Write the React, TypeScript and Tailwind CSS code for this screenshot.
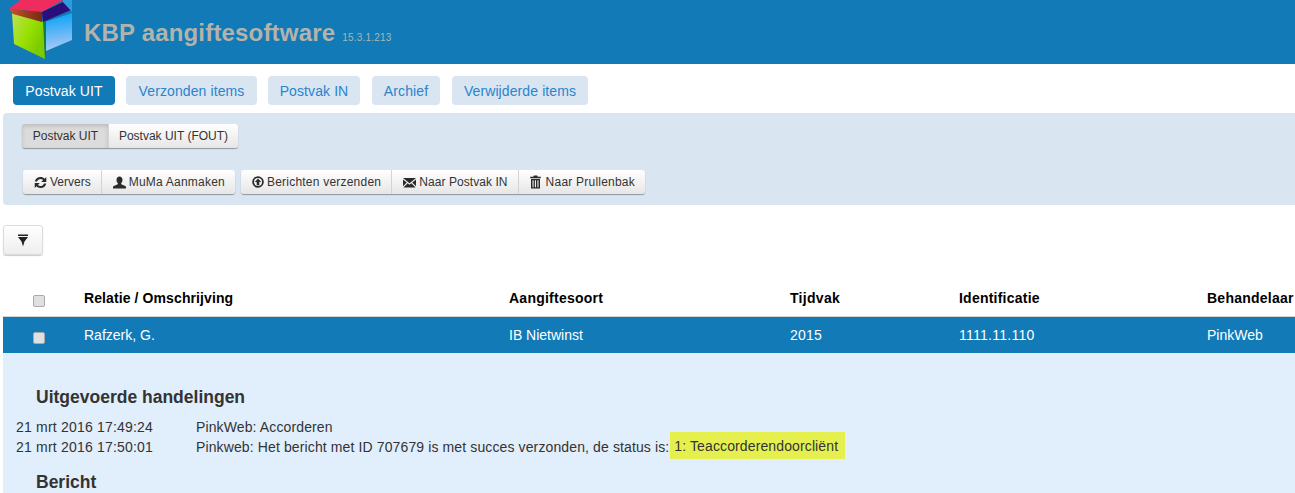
import React from "react";

const Logo = () => (
  <svg width="66" height="60" viewBox="9 0 66 60" className="ml-[9px] shrink-0">
    <defs>
      <linearGradient id="g1" x1="0" y1="0" x2="0.9" y2="0.6"><stop offset="0" stopColor="#bfe05c" /><stop offset="0.6" stopColor="#98e000" /><stop offset="1" stopColor="#7ccb00" /></linearGradient>
      <linearGradient id="g2" x1="0" y1="0" x2="0.1" y2="1"><stop offset="0" stopColor="#009ff7" /><stop offset="1" stopColor="#a8c9f6" /></linearGradient>
      <linearGradient id="g3" x1="0" y1="0" x2="1" y2="0"><stop offset="0" stopColor="#c4552c" /><stop offset="1" stopColor="#7a2a12" /></linearGradient>
    </defs>
    <polygon points="12,13 44,22 45,59 14,44" fill="url(#g1)" />
    <polygon points="45,22 72,13 72,40 46,51" fill="url(#g2)" />
    <polygon points="43,22 46,22 46,52 45,59" fill="#12803c" />
    <polygon points="9,9 20,0 63,0 42,12" fill="#ee2c5e" />
    <polygon points="9,9 42,12 42,22 13,14" fill="url(#g3)" />
    <polygon points="42,12 63,2 71,10 43,22" fill="#2a0f7a" />
    <polygon points="63,0 72,0 72,12 63,2" fill="#2c9be0" />
  </svg>
);

const Refresh = () => (
  <svg width="13" height="13" viewBox="0 0 13 13" className="shrink-0">
    <path d="M.8 5.600C1.300 2.700 3.600 1 6.500 1c1.700 0 3 .6 4.100 1.700L12.300.900v5H7.300l1.800-1.800c-.7-.7-1.600-1.100-2.600-1.100-1.500 0-2.900.9-3.500 2.600H.8zM12.200 7.400C11.700 10.300 9.400 12 6.500 12c-1.700 0-3-.6-4.100-1.700L.7 12.100v-5h5L3.900 8.900c.7.7 1.600 1.100 2.600 1.100 1.500 0 2.900-.9 3.500-2.600h2.200z" fill="#2a2a2a" />
  </svg>
);
const User = () => (
  <svg width="13" height="13" viewBox="0 0 13 13" className="shrink-0">
    <path d="M6.500.5c1.800 0 3 1.400 3 3.400 0 1.300-.5 2.500-1.300 3.100v1.300l4 1.700c.5.200.8.600.8 1.100v1.400H0v-1.400c0-.5.300-.9.800-1.100l4-1.700V7c-.8-.6-1.300-1.800-1.300-3.100C3.500 1.900 4.700.5 6.500.5z" fill="#2a2a2a" />
  </svg>
);
const CircleUp = () => (
  <svg width="12" height="12" viewBox="0 0 12 12" className="shrink-0">
    <circle cx="6" cy="6" r="4.900" fill="none" stroke="#2a2a2a" strokeWidth="1.800" />
    <path d="M6 2.600 9.200 6H7.300v3.200H4.700V6H2.800z" fill="#2a2a2a" />
  </svg>
);
const Mail = () => (
  <svg width="13" height="11" viewBox="0 0 13 11" className="shrink-0">
    <path d="M0 1h13L6.500 6.200 0 1zM0 2.500 3.800 5.600 0 9.200V2.500zM13 2.500v6.700L9.200 5.600 13 2.500zM4.700 6.300l1.800 1.500 1.800-1.500 4.300 4.200H.4l4.300-4.200z" fill="#2a2a2a" />
  </svg>
);
const Trash = () => (
  <svg width="11" height="14" viewBox="0 0 11 14" className="shrink-0">
    <path d="M3.800.5h3.400l.5 1.200h3.100v1.500H.2V1.700h3.100L3.800.500zM1 4h9v9.500H1V4zM2.500 5.200v7h1.100v-7H2.500zM4.900 5.200v7H6v-7H4.900zM7.400 5.200v7h1.100v-7H7.400z" fill="#2a2a2a" fillRule="evenodd" />
  </svg>
);
const Funnel = () => (
  <svg width="10" height="13" viewBox="0 0 10 13">
    <path d="M0 .5h10v1.400H0zM0 3h10L6.500 7.500 5 12.500 3.500 7.500z" fill="#222" />
  </svg>
);

const btn =
  "flex h-[24px] items-center gap-[3px] border-r border-[#d4d4d4] bg-gradient-to-b from-white to-[#e6e6e6] text-[12px] text-[#333] last:border-r-0";

function Group({ children }: { children: React.ReactNode }) {
  return (
    <div className="flex w-fit overflow-hidden rounded-[3px] shadow-[0_1px_1px_rgba(0,0,0,0.35)]">{children}</div>
  );
}

const tabs = [
  { t: "Verzonden items", w: "w-[131px]" },
  { t: "Postvak IN", w: "w-[92px]" },
  { t: "Archief", w: "w-[68px] ml-[1px]" },
  { t: "Verwijderde items", w: "w-[136px] ml-[1px]" },
];

export default function App() {
  return (
    <div className="h-[493px] w-[1295px] overflow-hidden bg-white font-['Liberation_Sans',sans-serif] text-[#333]">
      <header className="flex h-[64px] items-start overflow-hidden bg-[#117ab7]">
        <Logo />
        <div className="ml-[9px] mt-[18px] flex items-baseline gap-[7px]">
          <span className="text-[24px] font-bold leading-[30px] tracking-[0.18px] text-[#b3b3ab]">KBP aangiftesoftware</span>
          <span className="text-[10px] tracking-[0.2px] text-[#a9b5b8]">15.3.1.213</span>
        </div>
      </header>

      <nav className="ml-[13px] mt-[12px] flex gap-[11px] text-[14px] tracking-[0.1px]">
        <a className="flex h-[29px] w-[102px] items-center justify-center rounded-[4px] bg-[#117ab7] pt-[1px] text-white">Postvak UIT</a>
        {tabs.map(({ t, w }) => (
          <a key={t} className={"flex h-[29px] items-center justify-center rounded-[4px] bg-[#d9e5f1] pt-[1px] text-[#2a84cc] " + w}>{t}</a>
        ))}
      </nav>

      <section className="ml-[3px] mt-[8px] h-[92px] rounded-l-[4px] bg-[#d9e5f1] pl-[19px] pt-[11px]">
        <Group>
          <span className={btn + " w-[87px] justify-center pl-[1px] !bg-none !bg-[#dcdcdc] shadow-[inset_0_2px_4px_rgba(0,0,0,0.15)]"}>Postvak UIT</span>
          <span className={btn + " w-[129px] justify-center"}>Postvak UIT (FOUT)</span>
        </Group>
        <div className="ml-[1px] mt-[22px] flex gap-[6px]">
          <Group>
            <span className={btn + " pl-[11px] pr-[10px]"}><Refresh />Ververs</span>
            <span className={btn + " pl-[11px] pr-[10px] tracking-[0.22px]"}><User />MuMa Aanmaken</span>
          </Group>
          <Group>
            <span className={btn + " pl-[11px] pr-[10px] tracking-[0.22px]"}><CircleUp />Berichten verzenden</span>
            <span className={btn + " pl-[11px] pr-[10px] tracking-[0.07px]"}><Mail />Naar Postvak IN</span>
            <span className={btn + " gap-[5px] pl-[11px] pr-[10px] tracking-[0.22px]"}><Trash />Naar Prullenbak</span>
          </Group>
        </div>
      </section>

      <div className="ml-[3px] mt-[20px] flex h-[30px] w-[40px] items-center justify-center rounded-[3px] border border-[#dcdcdc] bg-gradient-to-b from-white to-[#eeeeee] shadow-[0_1px_1px_rgba(0,0,0,0.2)]">
        <Funnel />
      </div>

      <div className="ml-[3px] mt-[25px] flex h-[37px] items-center border-b border-[#d4d4d4] pt-[1px] text-[14px] font-bold text-black">
        <Cols head />
      </div>
      <div className="ml-[3px] flex h-[36px] items-center bg-[#117ab7] text-[14px] text-white">
        <Cols />
      </div>

      <div className="ml-[3px] h-[140px] overflow-hidden bg-[#e1eefb] pt-[33px]">
        <h3 className="ml-[33px] text-[17.5px] font-bold leading-[22px] text-[#333]">Uitgevoerde handelingen</h3>
        <div className="ml-[13px] mt-[9px] grid grid-cols-[180px_1fr] text-[14px] leading-[20px] tracking-[0.12px]">
          <span className="tracking-[0.2px]">21 mrt 2016 17:49:24</span>
          <span>PinkWeb: Accorderen</span>
          <span className="tracking-[0.2px]">21 mrt 2016 17:50:01</span>
          <span className="flex items-start">
            Pinkweb: Het bericht met ID 707679 is met succes verzonden, de status is:
            <span className="-mb-[4px] -mt-[5px] ml-[1px] bg-[#e5f04f] pb-[3px] pl-[4px] pr-[7px] pt-[5px] leading-[19px]">1: Teaccorderendoorcliënt</span>
          </span>
        </div>
        <h3 className="ml-[33px] mt-[14px] text-[17.5px] font-bold leading-[22px] text-[#333]">Bericht</h3>
      </div>
    </div>
  );
}

function Cols({ head }: { head?: boolean }) {
  const vals = head
    ? [
        { v: "Relatie / Omschrijving", c: "tracking-[0.1px]" },
        { v: "Aangiftesoort", c: "tracking-[0.24px]" },
        { v: "Tijdvak", c: "tracking-[0.3px]" },
        { v: "Identificatie", c: "tracking-[0.23px]" },
        { v: "Behandelaar", c: "tracking-[0.24px]" },
      ]
    : [
        { v: "Rafzerk, G.", c: "" },
        { v: "IB Nietwinst", c: "" },
        { v: "2015", c: "tracking-[0.25px]" },
        { v: "1111.11.110", c: "tracking-[0.27px]" },
        { v: "PinkWeb", c: "" },
      ];
  return (
    <div className="grid w-full grid-cols-[81px_425px_281px_169px_248px_1fr] items-center">
      <span className={"pl-[30px] " + (head ? "pt-[5px]" : "pt-[6px]")}>
        <span className="block h-[12px] w-[12px] rounded-[2px] border border-[#a9a9a9] bg-[#e0e0e0]" />
      </span>
      {vals.map(({ v, c }) => (
        <span key={v} className={"whitespace-nowrap " + c}>{v}</span>
      ))}
    </div>
  );
}
